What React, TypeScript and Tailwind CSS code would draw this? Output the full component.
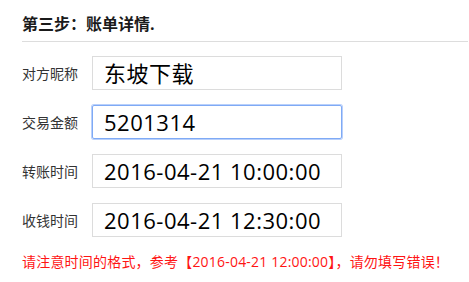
import React from 'react';

const rows = [
    { label: '对方昵称', value: '东坡下载', focused: false },
    { label: '交易金额', value: '5201314', focused: true },
    { label: '转账时间', value: '2016-04-21 10:00:00', focused: false },
    { label: '收钱时间', value: '2016-04-21 12:30:00', focused: false },
];

const App: React.FC = () => {
    return (
        <div
            className="w-[469px] h-[282px] bg-white pl-[22px] pr-px overflow-hidden"
            style={{ fontFamily: '"Open Sans", "Noto Sans CJK SC", sans-serif' }}
        >
            <div className="pt-[14px] pb-[6px] border-b border-[#dddddd]">
                <h2 className="text-[16px] leading-[21px] font-bold text-[#1a1a1a]">第三步：账单详情.</h2>
            </div>

            <div className="mt-[14px] flex flex-col gap-[15px]">
                {rows.map((r) => (
                    <div key={r.label} className="flex items-center h-[34px]">
                        <span className="w-[70px] text-[14px] text-[#333]">{r.label}</span>
                        <div
                            className={
                                r.focused
                                    ? 'w-[250px] h-[34px] border border-[#7faaf5] ring-1 ring-[#b9d0fb] rounded-[2px] pl-[11px] flex items-center'
                                    : 'w-[250px] h-[34px] border border-[#dcdcdc] pl-[11px] flex items-center'
                            }
                        >
                            <span className="text-[22px] leading-none tracking-[0.5px] text-black">{r.value}</span>
                        </div>
                    </div>
                ))}
            </div>

            <p className="mt-[15px] text-[14px] leading-[20px] tracking-[0.2px] text-[#ff1414] whitespace-nowrap">
                请注意时间的格式，参考【2016-04-21 12:00:00】，请勿填写错误！
            </p>
        </div>
    );
};

export default App;
